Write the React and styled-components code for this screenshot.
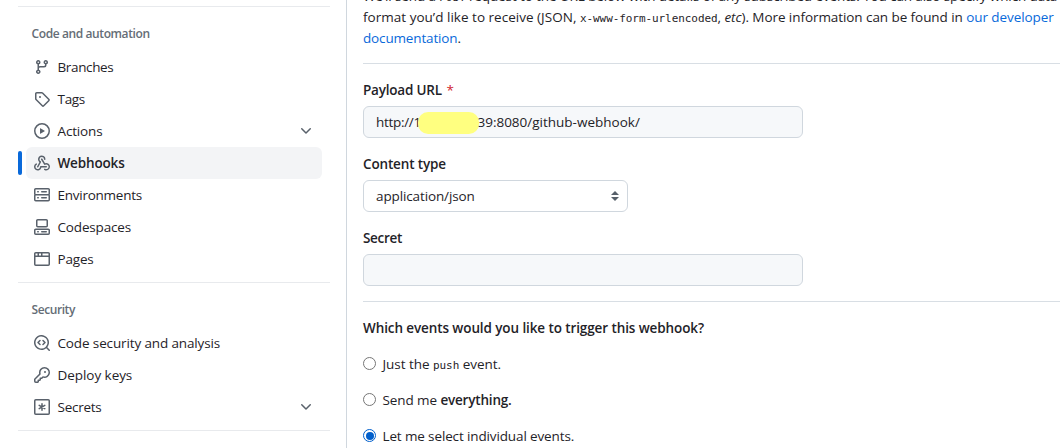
import React from 'react';
import styled, { createGlobalStyle } from 'styled-components';

const Global = createGlobalStyle`
  *, *::before, *::after { box-sizing: border-box; }
  html, body { margin: 0; padding: 0; background: #fff; overflow: hidden; }
  body {
    font-family: "Open Sans", "Noto Sans", sans-serif;
    font-size: 13.5px;
    line-height: 21px;
    color: #1f2328;
  }
`;

const Page = styled.div`
  display: flex;
  width: 1060px;
  height: 448px;
  overflow: hidden;
`;

const Sidebar = styled.nav`
  flex: none;
  width: 347px;
  height: 448px;
  padding: 6px 16px 0 18px;
  border-right: 1px solid #d0d7de;
`;

const Group = styled.section`
  width: 312px;
  height: ${p => p.$height}px;
  border-top: 1px solid #e8eaed;
  padding-top: 18px;
`;

const GroupTitle = styled.h3`
  margin: 0 0 8px 13.5px;
  font-size: 12px;
  line-height: 18px;
  font-weight: 600;
  color: #656d76;
  letter-spacing: ${p => p.$track || 0}px;
`;

const NavRow = styled.div`
  display: flex;
  align-items: center;
  gap: 4px;
  height: 32px;
`;

const Marker = styled.span`
  width: 4px;
  height: 24px;
  border-radius: 3px;
  background: ${p => (p.$active ? '#0969da' : 'transparent')};
`;

const NavLink = styled.a`
  display: flex;
  align-items: center;
  width: 296px;
  height: 32px;
  padding: 0 8px;
  border-radius: 6px;
  background: ${p => (p.$active ? '#f3f4f6' : 'transparent')};
  font-weight: ${p => (p.$active ? 600 : 400)};
`;

const NavLabel = styled.span`
  flex: 1;
  margin-left: 7.5px;
  white-space: nowrap;
  letter-spacing: ${p => p.$track || 0}px;
`;

const Glyph = styled.svg`
  flex: none;
  width: 16px;
  height: 16px;
  fill: #59616b;
`;

const Main = styled.main`
  flex: 1;
  min-width: 0;
  padding-left: 16px;
`;

const Intro = styled.div`
  height: 64px;
  border-bottom: 1px solid #d8dee4;
  overflow: hidden;
`;

const IntroLine = styled.p`
  margin: 0;
  height: 21px;
  white-space: nowrap;
  &:first-child { margin-top: -14px; }
`;

const Run = styled.span`
  letter-spacing: ${p => p.$track || 0}px;
  font-weight: ${p => (p.$bold ? 600 : 'inherit')};
`;

const Link = styled(Run)`
  color: #0969da;
`;

const Code = styled.code`
  font-family: "DejaVu Sans Mono", monospace;
  font-size: 11px;
  letter-spacing: ${p => p.$track || 0}px;
`;

const Field = styled.div`
  height: 74px;
`;

const Fields = styled.div`
  height: 238px;
  padding-top: 16px;
  border-bottom: 1px solid #d8dee4;
`;

const Label = styled.label`
  display: block;
  height: 21px;
  margin-bottom: 5px;
  font-weight: 600;
  letter-spacing: ${p => p.$track || 0}px;
`;

const Required = styled.span`
  color: #cf222e;
  margin-left: 4.5px;
  font-weight: 400;
`;

const Control = styled.div`
  display: flex;
  align-items: center;
  width: ${p => p.$width}px;
  height: 32px;
  padding: 0 8px 0 12px;
  border: 1px solid #d0d7de;
  border-radius: 6px;
  background: ${p => (p.$filled ? '#f6f8fa' : '#fff')};
  white-space: nowrap;
`;

const Redaction = styled.span`
  position: relative;
  flex: none;
  width: 61px;
  height: 22px;
  margin: 2px -1.5px 0 -3px;
  border-radius: 10px;
  background: #ffff80;
`;

const Arrows = styled.svg`
  width: 8px;
  height: 10px;
  margin-left: auto;
  fill: #57606a;
`;

const Question = styled.h4`
  margin: 16px 0 15px;
  font-size: inherit;
  line-height: 21px;
  font-weight: 600;
  letter-spacing: ${p => p.$track || 0}px;
`;

const Option = styled.label`
  display: flex;
  align-items: center;
  gap: 6.5px;
  height: 21px;
  margin-bottom: 15px;
  white-space: nowrap;
`;

const Dot = styled.span`
  flex: none;
  display: flex;
  align-items: center;
  justify-content: center;
  width: 13px;
  height: 13px;
  margin-top: -2px;
  border: 1px solid ${p => (p.$on ? '#005fcc' : '#767676')};
  border-radius: 50%;
  &::after {
    content: "";
    width: 8px;
    height: 8px;
    flex: none;
    margin: -0.5px;
    border-radius: 50%;
    background: ${p => (p.$on ? '#005fcc' : 'transparent')};
  }
`;

const icons = {
  branch: ['M9.5 3.25a2.25 2.25 0 1 1 3 2.122V6A2.5 2.5 0 0 1 10 8.5H6a1 1 0 0 0-1 1v1.128a2.251 2.251 0 1 1-1.5 0V5.372a2.25 2.25 0 1 1 1.5 0v1.836A2.493 2.493 0 0 1 6 7h4a1 1 0 0 0 1-1v-.628A2.25 2.25 0 0 1 9.5 3.25Zm-6 0a.75.75 0 1 0 1.5 0 .75.75 0 0 0-1.5 0Zm8.25-.75a.75.75 0 1 0 0 1.5.75.75 0 0 0 0-1.5ZM4.25 12a.75.75 0 1 0 0 1.5.75.75 0 0 0 0-1.5Z'],
  tag: ['M1 7.775V2.75C1 1.784 1.784 1 2.75 1h5.025c.464 0 .91.184 1.238.513l6.25 6.25a1.75 1.75 0 0 1 0 2.474l-5.026 5.026a1.75 1.75 0 0 1-2.474 0l-6.25-6.25A1.752 1.752 0 0 1 1 7.775Zm1.5 0c0 .066.026.13.073.177l6.25 6.25a.25.25 0 0 0 .354 0l5.025-5.025a.25.25 0 0 0 0-.354l-6.25-6.25a.25.25 0 0 0-.177-.073H2.75a.25.25 0 0 0-.25.25ZM6 5a1 1 0 1 1 0 2 1 1 0 0 1 0-2Z'],
  play: ['M8 0a8 8 0 1 1 0 16A8 8 0 0 1 8 0ZM1.5 8a6.5 6.5 0 1 0 13 0 6.5 6.5 0 0 0-13 0Zm4.879-2.773 4.264 2.559a.25.25 0 0 1 0 .428l-4.264 2.559A.25.25 0 0 1 6 10.559V5.442a.25.25 0 0 1 .379-.215Z'],
  webhook: [
    'M5.5 4.25a2.25 2.25 0 0 1 4.5 0 .75.75 0 0 0 1.5 0 3.75 3.75 0 1 0-6.14 2.889l-2.272 4.258a.75.75 0 0 0 1.324.706L7 7.25a.75.75 0 0 0-.309-1.015A2.25 2.25 0 0 1 5.5 4.25Z',
    'M7.364 3.607a.75.75 0 0 1 1.03.257l2.608 4.349a3.75 3.75 0 1 1-.628 6.785.75.75 0 0 1 .752-1.299 2.25 2.25 0 1 0-.033-3.88.75.75 0 0 1-1.03-.256L7.107 4.636a.75.75 0 0 1 .257-1.03Z',
    'M2.9 8.776A.75.75 0 0 1 2.625 9.8 2.25 2.25 0 1 0 6 11.75a.75.75 0 0 1 .75-.751h5.5a.75.75 0 0 1 0 1.5H7.425a3.751 3.751 0 1 1-5.55-3.998.75.75 0 0 1 1.024.274Z',
  ],
  server: ['M1.75 1h12.5c.966 0 1.75.784 1.75 1.75v4c0 .372-.116.717-.314 1 .198.283.314.628.314 1v4a1.75 1.75 0 0 1-1.75 1.75H1.75A1.75 1.75 0 0 1 0 12.75v-4c0-.358.109-.707.314-1a1.739 1.739 0 0 1-.314-1v-4C0 1.784.784 1 1.75 1ZM1.5 2.75v4c0 .138.112.25.25.25h12.5a.25.25 0 0 0 .25-.25v-4a.25.25 0 0 0-.25-.25H1.75a.25.25 0 0 0-.25.25Zm.25 5.75a.25.25 0 0 0-.25.25v4c0 .138.112.25.25.25h12.5a.25.25 0 0 0 .25-.25v-4a.25.25 0 0 0-.25-.25ZM7 4.75A.75.75 0 0 1 7.75 4h4.5a.75.75 0 0 1 0 1.5h-4.5A.75.75 0 0 1 7 4.75ZM7.75 10h4.5a.75.75 0 0 1 0 1.5h-4.5a.75.75 0 0 1 0-1.5ZM3 4.75A.75.75 0 0 1 3.75 4h.5a.75.75 0 0 1 0 1.5h-.5A.75.75 0 0 1 3 4.75ZM3.75 10h.5a.75.75 0 0 1 0 1.5h-.5a.75.75 0 0 1 0-1.5Z'],
  codespaces: [
    'M0 11.25c0-.966.784-1.75 1.75-1.75h12.5c.966 0 1.75.784 1.75 1.75v3A1.75 1.75 0 0 1 14.25 16H1.75A1.75 1.75 0 0 1 0 14.25Zm2-9.5C2 .784 2.784 0 3.75 0h8.5C13.216 0 14 .784 14 1.75v5a1.75 1.75 0 0 1-1.75 1.75h-8.5A1.75 1.75 0 0 1 2 6.75Zm1.75-.25a.25.25 0 0 0-.25.25v5c0 .138.112.25.25.25h8.5a.25.25 0 0 0 .25-.25v-5a.25.25 0 0 0-.25-.25Zm-2 9.5a.25.25 0 0 0-.25.25v3c0 .138.112.25.25.25h12.5a.25.25 0 0 0 .25-.25v-3a.25.25 0 0 0-.25-.25Z',
    'M7 12.75a.75.75 0 0 1 .75-.75h4.5a.75.75 0 0 1 0 1.5h-4.5a.75.75 0 0 1-.75-.75Zm-4 0a.75.75 0 0 1 .75-.75h.5a.75.75 0 0 1 0 1.5h-.5a.75.75 0 0 1-.75-.75Z',
  ],
  browser: ['M0 2.75C0 1.784.784 1 1.75 1h12.5c.966 0 1.75.784 1.75 1.75v10.5A1.75 1.75 0 0 1 14.25 15H1.75A1.75 1.75 0 0 1 0 13.25ZM14.5 6h-13v7.25c0 .138.112.25.25.25h12.5a.25.25 0 0 0 .25-.25Zm-6-3.5v2h6V2.75a.25.25 0 0 0-.25-.25ZM5 2.5v2h2v-2Zm-3.25 0a.25.25 0 0 0-.25.25V4.5h2v-2Z'],
  codescan: [
    'M8.47 4.97a.75.75 0 0 0 0 1.06L9.94 7.5 8.47 8.97a.75.75 0 1 0 1.06 1.06l2-2a.75.75 0 0 0 0-1.06l-2-2a.75.75 0 0 0-1.06 0ZM6.53 6.03a.75.75 0 0 0-1.06-1.06l-2 2a.75.75 0 0 0 0 1.06l2 2a.75.75 0 1 0 1.06-1.06L5.06 7.5l1.47-1.47Z',
    'M12.246 13.307a7.501 7.501 0 1 1 1.06-1.06l2.474 2.473a.749.749 0 0 1-.326 1.275.749.749 0 0 1-.734-.215ZM1.5 7.5a6.002 6.002 0 0 0 3.608 5.504 6.002 6.002 0 0 0 6.486-1.117.748.748 0 0 1 .292-.293A6 6 0 1 0 1.5 7.5Z',
  ],
  key: ['M10.5 0a5.499 5.499 0 1 1-1.288 10.848l-.932.932a.749.749 0 0 1-.53.22H7v.75a.749.749 0 0 1-.22.53l-.5.5a.749.749 0 0 1-.53.22H5v.75a.749.749 0 0 1-.22.53l-.5.5a.749.749 0 0 1-.53.22h-2A1.75 1.75 0 0 1 0 14.25v-2c0-.199.079-.389.22-.53l4.932-4.932A5.5 5.5 0 0 1 10.5 0Zm-4 5.5c-.001.431.069.86.205 1.269a.75.75 0 0 1-.181.768L1.5 12.56v1.69c0 .138.112.25.25.25h1.69l.06-.06v-1.19a.75.75 0 0 1 .75-.75h1.19l.06-.06v-1.19a.75.75 0 0 1 .75-.75h1.19l1.023-1.025a.75.75 0 0 1 .768-.18A4 4 0 1 0 6.5 5.5ZM11 6a1 1 0 1 1 0-2 1 1 0 0 1 0 2Z'],
  chevron: ['M12.78 5.22a.749.749 0 0 1 0 1.06l-4.25 4.25a.749.749 0 0 1-1.06 0L3.22 6.28a.749.749 0 1 1 1.06-1.06L8 8.939l3.72-3.719a.749.749 0 0 1 1.06 0Z'],
};

function Icon({ name }) {
  if (name === 'secret') {
    return (
      <Glyph viewBox="0 0 16 16">
        <rect x="0.75" y="0.75" width="14.5" height="14.5" rx="1" fill="none" stroke="#59616b" strokeWidth="1.5" />
        <path
          d="M8 4.75v6.5M5.2 6.4l5.6 3.2M10.8 6.4 5.2 9.6"
          fill="none" stroke="#59616b" strokeWidth="1.5" strokeLinecap="round"
        />
      </Glyph>
    );
  }
  return (
    <Glyph viewBox="0 0 16 16">
      {icons[name].map(d => <path key={d} d={d} />)}
    </Glyph>
  );
}

const automation = [
  { icon: 'branch', label: 'Branches', track: -0.37 },
  { icon: 'tag', label: 'Tags', track: -0.3 },
  { icon: 'play', label: 'Actions', track: -0.15, more: true },
  { icon: 'webhook', label: 'Webhooks', track: -0.15, active: true },
  { icon: 'server', label: 'Environments', track: -0.25 },
  { icon: 'codespaces', label: 'Codespaces', track: -0.16 },
  { icon: 'browser', label: 'Pages', track: -0.18 },
];

const security = [
  { icon: 'codescan', label: 'Code security and analysis', track: -0.13 },
  { icon: 'key', label: 'Deploy keys', track: -0.05 },
  { icon: 'secret', label: 'Secrets', track: -0.25, more: true },
];

function NavItem({ icon, label, track, active, more }) {
  return (
    <NavRow>
      <Marker $active={active} />
      <NavLink $active={active}>
        <Icon name={icon} />
        <NavLabel $track={track}>{label}</NavLabel>
        {more && <Icon name="chevron" />}
      </NavLink>
    </NavRow>
  );
}

export default function App() {
  return (
    <Page>
      <Global />
      <Sidebar>
        <Group $height={276}>
          <GroupTitle $track={-0.4}>Code and automation</GroupTitle>
          {automation.map(item => <NavItem key={item.label} {...item} />)}
        </Group>
        <Group $height={148}>
          <GroupTitle $track={-0.42}>Security</GroupTitle>
          {security.map(item => <NavItem key={item.label} {...item} />)}
        </Group>
        <Group $height={40} />
      </Sidebar>
      <Main>
        <Intro>
          <IntroLine>
            <Run $track={-0.11}>
              We’ll send a <Code $track={-0.07}>POST</Code> request to the URL below with details of any subscribed events. You can also specify which data
            </Run>
          </IntroLine>
          <IntroLine>
            <Run $track={0.02}>format you’d like to receive (JSON, </Run>
            <Code $track={-0.07}>x-www-form-urlencoded</Code>
            <Run $track={-0.07}>, <em>etc</em>). More information can be found in </Run>
            <Link $track={-0.08}>our developer</Link>
          </IntroLine>
          <IntroLine>
            <Link $track={-0.15}>documentation</Link>.
          </IntroLine>
        </Intro>
        <Fields>
          <Field>
            <Label $track={-0.2}>Payload URL<Required>*</Required></Label>
            <Control $width={440} $filled>
              <Run $track={-0.3}>http://1</Run>
              <Redaction />
              <Run $track={0}>39:8080/github-webhook/</Run>
            </Control>
          </Field>
          <Field>
            <Label $track={-0.15}>Content type</Label>
            <Control $width={265}>
              <Run $track={-0.12}>application/json</Run>
              <Arrows viewBox="0 0 8 10"><path d="M4 0l4 4H0zM0 6h8L4 10z" /></Arrows>
            </Control>
          </Field>
          <Field>
            <Label $track={-0.3}>Secret</Label>
            <Control $width={440} $filled />
          </Field>
        </Fields>
        <Question $track={-0.1}>Which events would you like to trigger this webhook?</Question>
        <Option><Dot /><Run $track={-0.04}>Just the <Code $track={-0.07}>push</Code> event.</Run></Option>
        <Option><Dot /><Run $track={-0.09}>Send me <Run $bold $track={-0.19}>everything.</Run></Run></Option>
        <Option><Dot $on /><Run $track={-0.13}>Let me select individual events.</Run></Option>
      </Main>
    </Page>
  );
}
